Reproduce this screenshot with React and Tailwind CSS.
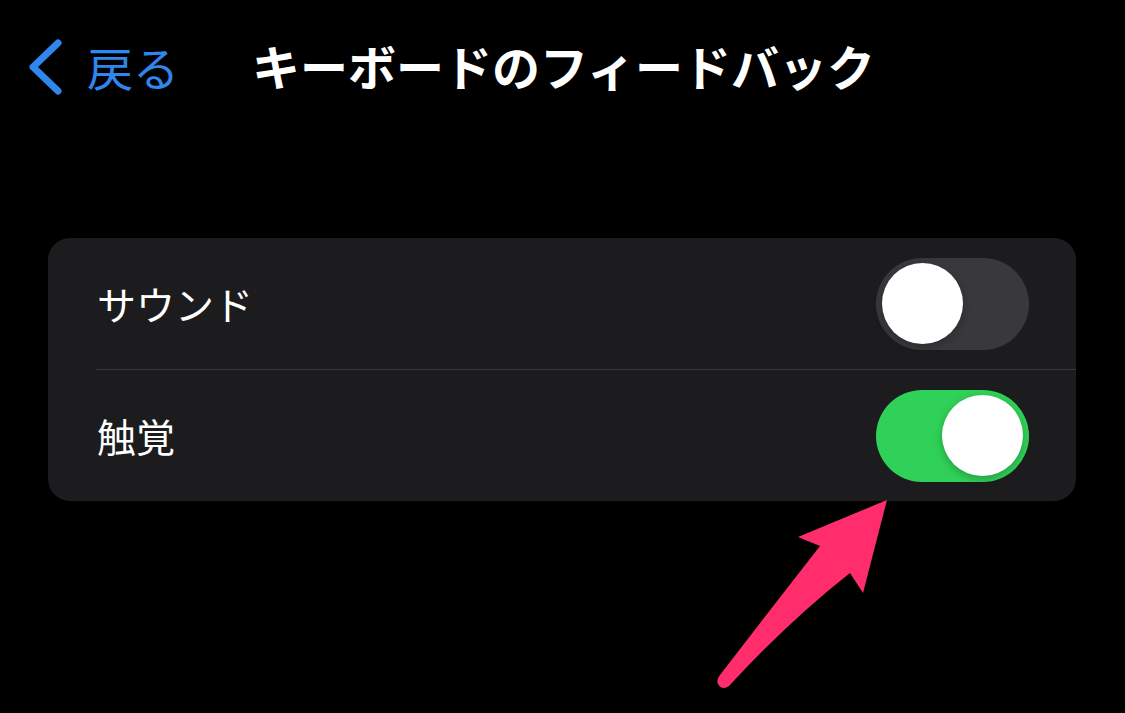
import { useState } from 'react';

const jp = { fontFamily: '"Noto Sans CJK JP", "Noto Sans", sans-serif' };

function Toggle({ on, onClick }) {
  return (
    <button
      type="button"
      onClick={onClick}
      className={`relative w-[153px] h-[92px] rounded-full flex items-center px-[6px] ${
        on ? 'bg-[#30d158] justify-end' : 'bg-[#39393d] justify-start'
      }`}
    >
      <span className="block w-[81px] h-[81px] rounded-full bg-white shadow-[0_3px_8px_rgba(0,0,0,0.25)]" />
    </button>
  );
}

export default function App() {
  const [sound, setSound] = useState(false);
  const [haptic, setHaptic] = useState(true);

  return (
    <div className="relative w-[1125px] h-[713px] bg-black overflow-hidden" style={jp}>
      {/* Nav bar */}
      <div className="flex items-center pt-[33px] pl-[27px] h-[96px]">
        <svg width="36" height="56" viewBox="0 0 36 56" className="shrink-0 mt-[5px]">
          <path d="M31 4 L6 28 L31 52" fill="none" stroke="#2f86ee" strokeWidth="7" strokeLinecap="round" strokeLinejoin="round" />
        </svg>
        <span className="ml-[24px] text-[46px] leading-none text-[#2f86ee] mt-[3px]">戻る</span>
        <span className="ml-[73px] text-[48px] leading-none font-bold text-white">キーボードのフィードバック</span>
      </div>

      {/* Settings group */}
      <div className="mt-[142px] ml-[48px] mr-[49px] rounded-[22px] bg-[#1c1c1e]">
        <div className="h-[131px] flex items-center justify-between pl-[49px] pr-[47px]">
          <span className="text-[39px] leading-none text-white">サウンド</span>
          <Toggle on={sound} onClick={() => setSound(!sound)} />
        </div>
        <div className="ml-[48px] h-px bg-[#3a3a3c]" />
        <div className="h-[131px] flex items-center justify-between pl-[49px] pr-[47px]">
          <span className="text-[39px] leading-none text-white">触覚</span>
          <Toggle on={haptic} onClick={() => setHaptic(!haptic)} />
        </div>
      </div>

      {/* Annotation arrow */}
      <svg className="absolute left-0 top-0 pointer-events-none" width="1125" height="713" viewBox="0 0 1125 713">
        <path
          d="M887 500 L863 593 L850 573 Q790 620 729 686 Q722 691 718 684 Q716 680 720 675 Q770 610 820 546 L798 537 Z"
          fill="#ff2d6c"
        />
      </svg>
    </div>
  );
}
